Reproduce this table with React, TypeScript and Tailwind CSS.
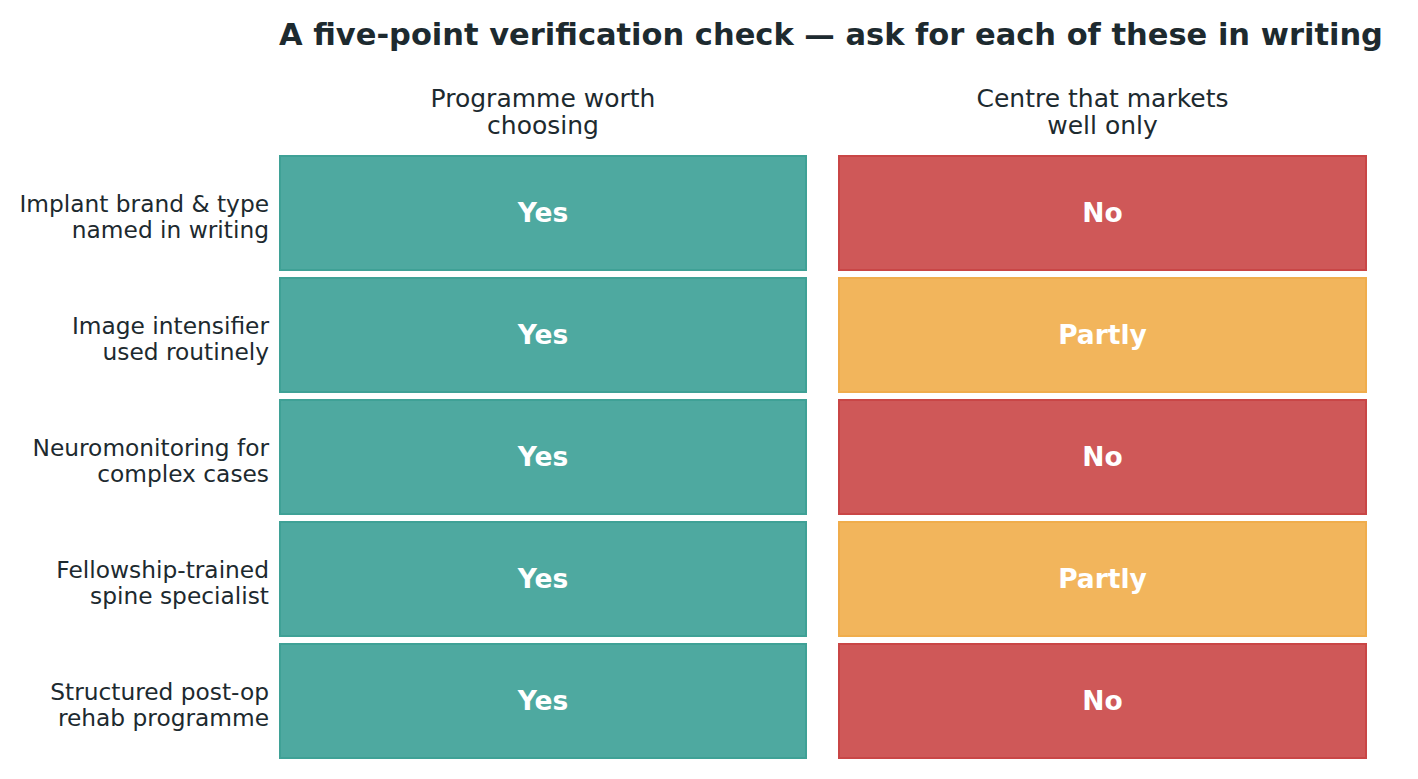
import React from "react";

type Cell = { text: string; kind: "yes" | "no" | "partly" };

const rows: { label: [string, string]; right: Cell }[] = [
  { label: ["Implant brand & type", "named in writing"], right: { text: "No", kind: "no" } },
  { label: ["Image intensifier", "used routinely"], right: { text: "Partly", kind: "partly" } },
  { label: ["Neuromonitoring for", "complex cases"], right: { text: "No", kind: "no" } },
  { label: ["Fellowship-trained", "spine specialist"], right: { text: "Partly", kind: "partly" } },
  { label: ["Structured post-op", "rehab programme"], right: { text: "No", kind: "no" } },
];

const kindClass: Record<Cell["kind"], string> = {
  yes: "bg-[#4ea9a0] border-[#3fa196]",
  no: "bg-[#cf5858] border-[#c94646]",
  partly: "bg-[#f2b55c] border-[#f0ad4c]",
};

function Box({ cell, width }: { cell: Cell; width: string }) {
  return (
    <div
      className={`${width} h-[116px] border-2 flex items-center justify-center text-white font-bold text-[26.5px] ${kindClass[cell.kind]}`}
    >
      {cell.text}
    </div>
  );
}

export default function App() {
  return (
    <div
      className="w-[1418px] h-[779px] bg-white overflow-hidden text-[#1d2a2f]"
      style={{ fontFamily: "'DejaVu Sans', sans-serif" }}
    >
      <h1 className="pl-[279px] pt-[17px] text-[30.5px] leading-[36px] font-bold whitespace-nowrap">
        A five-point verification check — ask for each of these in writing
      </h1>
      <div className="flex pl-[279px] mt-[32px] text-[25px] leading-[27px] text-center">
        <div className="w-[528px]">
          Programme worth
          <br />
          choosing
        </div>
        <div className="w-[31px]" />
        <div className="w-[529px]">
          Centre that markets
          <br />
          well only
        </div>
      </div>
      <div className="flex flex-col gap-[6px] mt-[16px]">
        {rows.map((r, i) => (
          <div key={i} className="flex items-center">
            <div className="w-[269px] mr-[10px] pt-[7px] text-right text-[23.3px] leading-[26px] whitespace-nowrap">
              {r.label[0]}
              <br />
              {r.label[1]}
            </div>
            <Box cell={{ text: "Yes", kind: "yes" }} width="w-[528px]" />
            <div className="w-[31px]" />
            <Box cell={r.right} width="w-[529px]" />
          </div>
        ))}
      </div>
    </div>
  );
}
